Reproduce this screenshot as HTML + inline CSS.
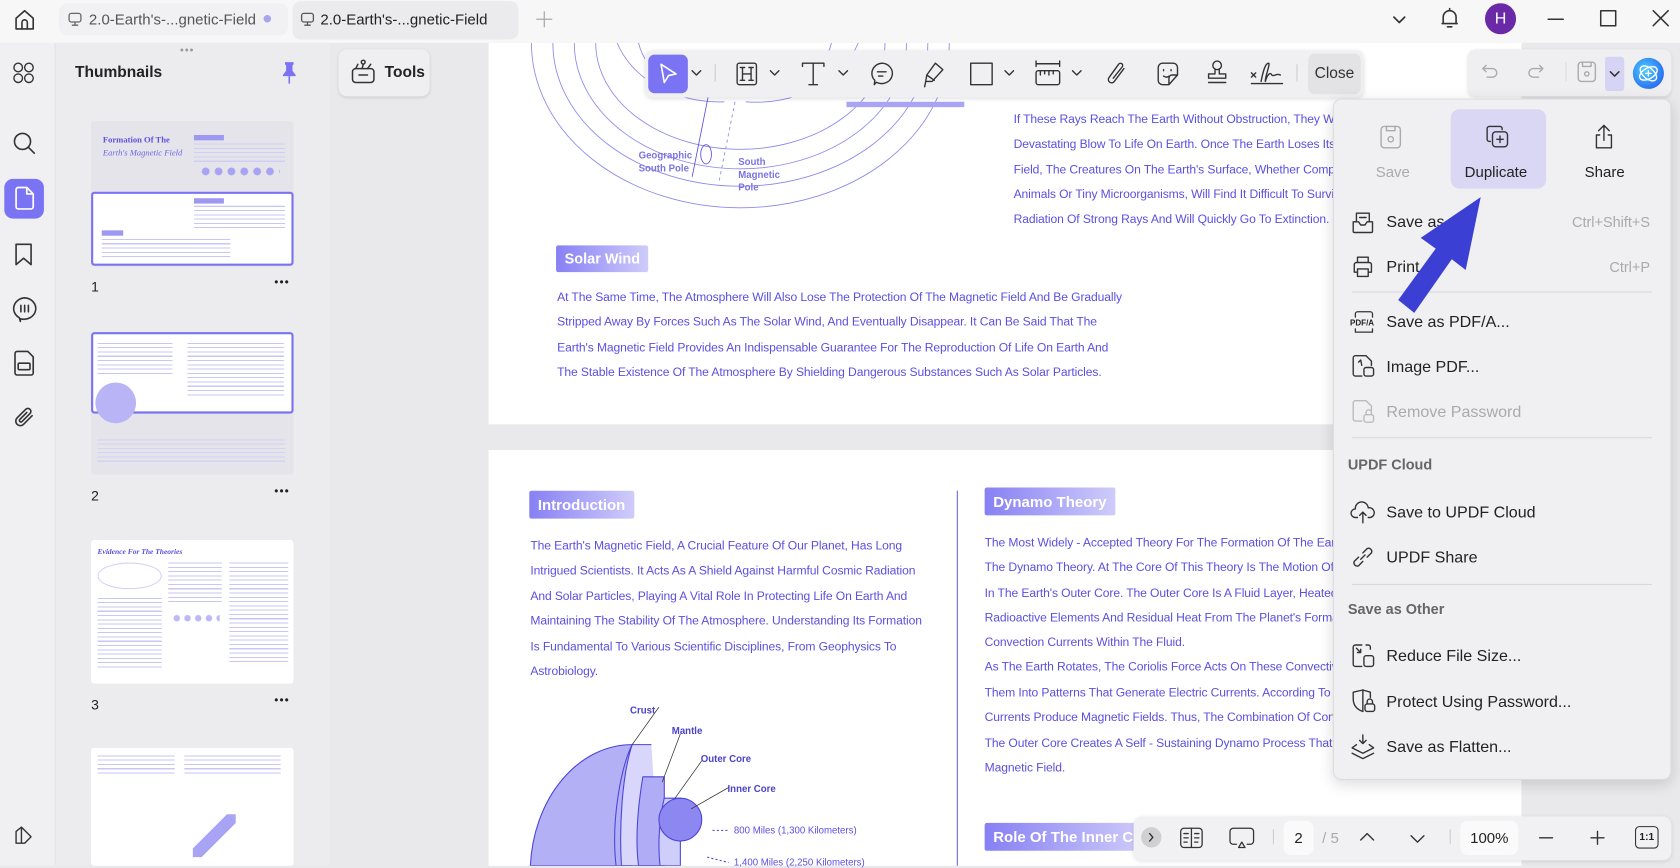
<!DOCTYPE html>
<html><head><meta charset="utf-8"><style>
*{box-sizing:border-box;margin:0;padding:0}
html,body{width:1680px;height:866px;overflow:hidden;background:#e9e9eb}
#w{position:absolute;left:0;top:0;width:1568px;height:808px;transform:scale(1.071429);transform-origin:0 0;font-family:"Liberation Sans",sans-serif;color:#222}
.a{position:absolute}
.ic{position:absolute;fill:none;stroke:#333;stroke-width:1.5;stroke-linecap:round;stroke-linejoin:round}
.t{position:absolute;font-size:11.3px;color:#5b50e0;white-space:nowrap;letter-spacing:-.1px}
.badge{position:absolute;color:#fff;font-weight:bold;font-size:14px;padding:0 8px;line-height:26px;white-space:nowrap;overflow:hidden;background:linear-gradient(90deg,#8780f4,#cfccfa);border-radius:2px}
.mi{position:absolute;left:1294px;font-size:15px;color:#222}
.sc{position:absolute;right:28px;font-size:13.5px;color:#aaa}
.sep{position:absolute;left:1262px;width:280px;height:1px;background:#d8d8dc}
.th{position:absolute;left:85px;width:189px;background:#fff;border-radius:3px}
</style></head><body><div id="w">
<div class="a" style="left:0;top:0;width:1568px;height:40px;background:#f7f7f8"></div>
<svg class="ic" style="left:11px;top:7px" width="24" height="24" viewBox="0 0 24 24"><path d="M4 10 L12 3 L20 10 V20 H4 Z"/><path d="M9.5 20 V14 a2.5 2.5 0 0 1 5 0 V20"/></svg>
<div class="a" style="left:55px;top:3px;width:214px;height:30px;border-radius:8px;background:#f1f1f3"></div>
<svg class="ic" style="left:63px;top:11px;stroke:#666;stroke-width:1.2" width="14" height="14" viewBox="0 0 14 14"><rect x="1.5" y="1.5" width="11" height="8" rx="2"/><path d="M7 9.5 V12 M4.5 12.5 H9.5"/></svg>
<div class="a" style="left:83px;top:10px;font-size:14px;color:#555">2.0-Earth's-...gnetic-Field</div>
<div class="a" style="left:246px;top:14px;width:7px;height:7px;border-radius:50%;background:#a9a4ee"></div>
<div class="a" style="left:273px;top:1px;width:211px;height:36px;border-radius:8px;background:#ebebed"></div>
<svg class="ic" style="left:280px;top:11px;stroke:#555;stroke-width:1.2" width="14" height="14" viewBox="0 0 14 14"><rect x="1.5" y="1.5" width="11" height="8" rx="2"/><path d="M7 9.5 V12 M4.5 12.5 H9.5"/></svg>
<div class="a" style="left:299px;top:10px;font-size:14px;color:#222">2.0-Earth's-...gnetic-Field</div>
<svg class="ic" style="left:500px;top:10px;stroke:#aaa;stroke-width:1.2" width="16" height="16"><path d="M8 1 V15 M1 8 H15"/></svg>
<svg class="ic" style="left:1299px;top:11px;stroke-width:1.6" width="14" height="14"><path d="M2 5 L7 10 L12 5"/></svg>
<svg class="ic" style="left:1342px;top:6px" width="22" height="22" viewBox="0 0 22 22"><path d="M5 16 V10 a6 6 0 0 1 12 0 V16 H4 H18"/><path d="M9 19 H13 M11 2 V4"/></svg>
<div class="a" style="left:1386px;top:3px;width:29px;height:29px;border-radius:50%;background:#6a2aa8;color:#fff;font-size:15px;text-align:center;line-height:29px">H</div>
<svg class="ic" style="left:1443px;top:9px;stroke-width:1.4" width="18" height="18"><path d="M2 9 H16"/></svg>
<svg class="ic" style="left:1492px;top:8px;stroke-width:1.4" width="18" height="18"><rect x="2" y="2" width="14" height="14"/></svg>
<svg class="ic" style="left:1541px;top:8px;stroke-width:1.4" width="18" height="18"><path d="M2 2 L16 16 M16 2 L2 16"/></svg>

<div class="a" style="left:0;top:40px;width:52px;height:768px;background:#f0f0f2;border-right:1px solid #e0e0e3"></div>
<svg class="ic" style="left:11px;top:57px;stroke-width:1.3" width="22" height="22"><circle cx="6" cy="6" r="4"/><circle cx="16" cy="6" r="4"/><circle cx="6" cy="16" r="4"/><circle cx="16" cy="16" r="4"/></svg>
<svg class="ic" style="left:11px;top:122px" width="24" height="24"><circle cx="10" cy="10" r="7.5"/><path d="M15.5 15.5 L21 21"/></svg>
<div class="a" style="left:4px;top:167px;width:37px;height:37px;border-radius:8px;background:#7a74f4"></div>
<svg class="ic" style="left:13px;top:174px;stroke:#fff;stroke-width:1.6" width="20" height="22"><path d="M2 3 a2 2 0 0 1 2-2 H12 L18 7 V19 a2 2 0 0 1-2 2 H4 a2 2 0 0 1-2-2 Z M12 1 V7 H18"/></svg>
<svg class="ic" style="left:13px;top:226px" width="20" height="24"><path d="M2 2 H16 V21 L9 15 L2 21 Z"/></svg>
<svg class="ic" style="left:10px;top:276px" width="26" height="26"><path d="M13 2 a11 10 0 1 1-4 19.5 L9 24 L8 20.5 A11 10 0 0 1 13 2 Z"/><path d="M9.5 9 V15 M13 9 V15 M16.5 9 V15"/></svg>
<svg class="ic" style="left:12px;top:327px" width="22" height="25"><path d="M2 3 a2 2 0 0 1 2-2 H14 L19 6 V21 a2 2 0 0 1-2 2 H4 a2 2 0 0 1-2-2 Z"/><rect x="5" y="12" width="11" height="6" rx="1"/></svg>
<svg class="ic" style="left:11px;top:378px" width="24" height="24"><path d="M19 10 L11 18 a4 4 0 0 1-6-6 L13 4 a2.8 2.8 0 0 1 4 4 L9.5 15.5 a1.3 1.3 0 0 1-2-2 L14 7"/></svg>
<svg class="ic" style="left:12px;top:770px;stroke-width:1.3" width="20" height="20"><path d="M3 17 V6 L8 2 L17 11 L11 17 Z M8 2 V17"/></svg>

<div class="a" style="left:52px;top:40px;width:256px;height:768px;background:#ececee"></div>
<div class="a" style="left:168px;top:42px;font-size:10px;color:#999;letter-spacing:1px">•••</div>
<div class="a" style="left:70px;top:60px;font-size:14.5px;font-weight:bold;color:#222">Thumbnails</div>
<svg class="a" style="left:262px;top:57px" width="16" height="22"><path d="M4 1 H12 V3 L11 4 V9 L14 13 V14 H2 V13 L5 9 V4 L4 3 Z" fill="#7a74f4"/><path d="M8 14 V21" stroke="#7a74f4" stroke-width="1.5"/></svg>
<div class="th" style="top:113px;height:136px;background:#e4e4ea"></div>
<div class="a" style="left:96px;top:126px;font-family:'Liberation Serif',serif;font-size:8px;font-weight:bold;color:#5b50e0">Formation Of The</div>
<div class="a" style="left:96px;top:138px;font-family:'Liberation Serif',serif;font-size:8px;font-style:italic;color:#6e66e6">Earth's Magnetic Field</div>
<div class="a" style="left:181px;top:126px;width:28px;height:5px;background:#9d98f2"></div>
<div class="a" style="left:181px;top:134px;width:85px;height:18px;background:repeating-linear-gradient(#d0cef5 0 1px,transparent 1px 4px)"></div>
<div class="a" style="left:186px;top:154px;width:75px;height:12px;background:radial-gradient(circle,#a8a3f3 40%,transparent 45%) 0 0/12px 12px"></div>
<div class="th" style="top:179px;height:69px;border:2px solid #7a74f4"></div>
<div class="a" style="left:181px;top:185px;width:28px;height:5px;background:#9d98f2"></div>
<div class="a" style="left:181px;top:192px;width:85px;height:22px;background:repeating-linear-gradient(#c9c6f5 0 1px,transparent 1px 4px)"></div>
<div class="a" style="left:95px;top:215px;width:20px;height:5px;background:#9d98f2"></div>
<div class="a" style="left:95px;top:223px;width:120px;height:18px;background:repeating-linear-gradient(#c9c6f5 0 1px,transparent 1px 4px)"></div>
<div class="a" style="left:85px;top:260px;font-size:13px">1</div>
<div class="a" style="left:256px;top:258px;font-size:11px;letter-spacing:1px">•••</div>
<div class="th" style="top:310px;height:133px;background:#e4e4ea"></div>
<div class="th" style="top:310px;height:76px;border:2px solid #7a74f4"></div>
<div class="a" style="left:91px;top:320px;width:70px;height:30px;background:repeating-linear-gradient(#c9c6f5 0 1px,transparent 1px 4px)"></div>
<div class="a" style="left:175px;top:320px;width:90px;height:50px;background:repeating-linear-gradient(#c9c6f5 0 1px,transparent 1px 4px)"></div>
<div class="a" style="left:89px;top:357px;width:38px;height:38px;border-radius:50%;background:#b8b4f6"></div>
<div class="a" style="left:91px;top:410px;width:175px;height:22px;background:repeating-linear-gradient(#d4d2f3 0 1px,transparent 1px 4px)"></div>
<div class="a" style="left:85px;top:455px;font-size:13px">2</div>
<div class="a" style="left:256px;top:453px;font-size:11px;letter-spacing:1px">•••</div>
<div class="th" style="top:504px;height:134px"></div>
<div class="a" style="left:91px;top:511px;font-family:'Liberation Serif',serif;font-size:7px;font-style:italic;color:#5b50e0"><b>Evidence For The Theories</b></div>
<div class="a" style="left:91px;top:525px;width:60px;height:25px;border-radius:50%;border:1px solid #d2d0f6"></div>
<div class="a" style="left:91px;top:558px;width:60px;height:66px;background:repeating-linear-gradient(#c9c6f5 0 1px,transparent 1px 4px)"></div>
<div class="a" style="left:157px;top:525px;width:50px;height:40px;background:repeating-linear-gradient(#c9c6f5 0 1px,transparent 1px 4px)"></div>
<div class="a" style="left:160px;top:572px;width:45px;height:10px;background:radial-gradient(circle,#bdb9f5 40%,transparent 45%) 0 0/10px 10px"></div>
<div class="a" style="left:214px;top:525px;width:55px;height:95px;background:repeating-linear-gradient(#c9c6f5 0 1px,transparent 1px 4px)"></div>
<div class="a" style="left:85px;top:650px;font-size:13px">3</div>
<div class="a" style="left:256px;top:648px;font-size:11px;letter-spacing:1px">•••</div>
<div class="th" style="top:698px;height:110px"></div>
<div class="a" style="left:91px;top:705px;width:72px;height:20px;background:repeating-linear-gradient(#c9c6f5 0 1px,transparent 1px 4px)"></div>
<div class="a" style="left:172px;top:705px;width:90px;height:20px;background:repeating-linear-gradient(#c9c6f5 0 1px,transparent 1px 4px)"></div>
<div class="a" style="left:180px;top:760px;width:40px;height:40px;background:linear-gradient(135deg,transparent 40%,#a8a3f3 40% 60%,transparent 60%)"></div>

<div class="a" style="left:310px;top:40px;width:1258px;height:768px;background:#e9e9eb"></div>
<div class="a" style="left:316px;top:46px;width:85px;height:44px;border-radius:8px;background:#efeff1;box-shadow:0 1px 3px rgba(0,0,0,.1)"></div>
<svg class="ic" style="left:326px;top:55px;stroke-width:1.4" width="26" height="24"><rect x="3" y="9" width="20" height="13" rx="3"/><path d="M9 15 H17"/><path d="M6 9 L8 5 M12 9 L13 5 M17 9 L20 5"/><circle cx="13" cy="3" r="1.8"/></svg>
<div class="a" style="left:359px;top:60px;font-size:14.5px;font-weight:bold">Tools</div>

<div class="a" style="left:456px;top:40px;width:964px;height:356px;background:#fff"></div>
<svg class="a" style="left:456px;top:40px" width="440" height="160" fill="none" stroke="#8d88ea" stroke-width=".8">
<path d="M40 0 A190 150 0 0 0 430 0"/><path d="M60 0 A170 130 0 0 0 410 0"/><path d="M80 0 A145 110 0 0 0 390 0"/><path d="M100 0 A125 92 0 0 0 370 0"/>
<path d="M120 0 A100 80 0 0 0 220 55"/><path d="M140 0 A80 60 0 0 0 215 50"/><path d="M240 55 A100 80 0 0 0 345 0"/><path d="M245 50 A80 60 0 0 0 320 0"/>
<path d="M205 50 L190 125" stroke="#5b50e0"/><path d="M230 55 L215 130" stroke-dasharray="3 3"/>
<ellipse cx="203" cy="104" rx="5" ry="9" stroke="#5b50e0"/></svg>
<div class="a" style="left:596px;top:139px;font-size:9px;font-weight:bold;color:#7a74e0;line-height:12px">Geographic<br>South Pole</div>
<div class="a" style="left:689px;top:145px;font-size:9px;font-weight:bold;color:#7a74e0;line-height:12px">South<br>Magnetic<br>Pole</div>
<div class="a" style="left:790px;top:95px;width:110px;height:5px;background:#a9a4f3"></div>
<div class="t" style="left:946px;top:106px">If These Rays Reach The Earth Without Obstruction, They Wi</div>
<div class="t" style="left:946px;top:129px">Devastating Blow To Life On Earth. Once The Earth Loses Its</div>
<div class="t" style="left:946px;top:153px">Field, The Creatures On The Earth's Surface, Whether Compl</div>
<div class="t" style="left:946px;top:176px">Animals Or Tiny Microorganisms, Will Find It Difficult To Survi</div>
<div class="t" style="left:946px;top:199px">Radiation Of Strong Rays And Will Quickly Go To Extinction.</div>
<div class="badge" style="left:519px;top:229px;height:25px;font-size:13.5px;line-height:25px">Solar Wind</div>
<div class="t" style="left:520px;top:272px">At The Same Time, The Atmosphere Will Also Lose The Protection Of The Magnetic Field And Be Gradually</div>
<div class="t" style="left:520px;top:295px">Stripped Away By Forces Such As The Solar Wind, And Eventually Disappear. It Can Be Said That The</div>
<div class="t" style="left:520px;top:319px">Earth's Magnetic Field Provides An Indispensable Guarantee For The Reproduction Of Life On Earth And</div>
<div class="t" style="left:520px;top:342px">The Stable Existence Of The Atmosphere By Shielding Dangerous Substances Such As Solar Particles.</div>

<div class="a" style="left:456px;top:420px;width:964px;height:388px;background:#fff"></div>
<div class="badge" style="left:494px;top:458px;height:26px">Introduction</div>
<div class="t" style="left:495px;top:504px">The Earth's Magnetic Field, A Crucial Feature Of Our Planet, Has Long</div>
<div class="t" style="left:495px;top:527px">Intrigued Scientists. It Acts As A Shield Against Harmful Cosmic Radiation</div>
<div class="t" style="left:495px;top:551px">And Solar Particles, Playing A Vital Role In Protecting Life On Earth And</div>
<div class="t" style="left:495px;top:574px">Maintaining The Stability Of The Atmosphere. Understanding Its Formation</div>
<div class="t" style="left:495px;top:598px">Is Fundamental To Various Scientific Disciplines, From Geophysics To</div>
<div class="t" style="left:495px;top:621px">Astrobiology.</div>
<div class="a" style="left:893px;top:458px;width:1px;height:350px;background:#6a62e0"></div>
<div class="badge" style="left:919px;top:455px;height:26px">Dynamo Theory</div>
<div class="t" style="left:919px;top:501px">The Most Widely - Accepted Theory For The Formation Of The Ear</div>
<div class="t" style="left:919px;top:524px">The Dynamo Theory. At The Core Of This Theory Is The Motion Of</div>
<div class="t" style="left:919px;top:548px">In The Earth's Outer Core. The Outer Core Is A Fluid Layer, Heated</div>
<div class="t" style="left:919px;top:571px">Radioactive Elements And Residual Heat From The Planet's Forma</div>
<div class="t" style="left:919px;top:594px">Convection Currents Within The Fluid.</div>
<div class="t" style="left:919px;top:617px">As The Earth Rotates, The Coriolis Force Acts On These Convectiv</div>
<div class="t" style="left:919px;top:641px">Them Into Patterns That Generate Electric Currents. According To</div>
<div class="t" style="left:919px;top:664px">Currents Produce Magnetic Fields. Thus, The Combination Of Conv</div>
<div class="t" style="left:919px;top:688px">The Outer Core Creates A Self - Sustaining Dynamo Process That</div>
<div class="t" style="left:919px;top:711px">Magnetic Field.</div>
<div class="badge" style="left:919px;top:768px;height:26px;width:150px">Role Of The Inner Core</div>
<svg class="a" style="left:490px;top:655px" width="320" height="153" fill="none" stroke="#4b43d8" stroke-width="1">
<path d="M100 40 A95 120 0 0 0 5 153 H100 Z" fill="#b4b0f6"/>
<path d="M100 40 C 90 60 80 110 85 153" stroke="#4b43d8"/>
<path d="M118 40 L100 40 C 90 70 88 120 90 153 H125" fill="#d8d6fb"/>
<path d="M110 70 C105 100 103 130 106 153 H130 V70 Z" fill="#b0acf6"/>
<path d="M130 90 C125 110 124 135 126 153 H145 V90 Z" fill="#cfcdfa"/>
<circle cx="145" cy="110" r="20" fill="#8d87f2"/>
<path d="M100 40 L125 5 M128 75 L145 30 M140 90 L165 55 M155 100 L190 80" stroke="#333" stroke-width=".7"/>
<path d="M175 120 L190 120" stroke-dasharray="2 2"/><path d="M170 145 L190 150" stroke-dasharray="2 2"/></svg>
<div class="a" style="left:588px;top:658px;font-size:9px;font-weight:bold;color:#4b43c8">Crust</div>
<div class="a" style="left:627px;top:677px;font-size:9px;font-weight:bold;color:#4b43c8">Mantle</div>
<div class="a" style="left:654px;top:703px;font-size:9px;font-weight:bold;color:#4b43c8">Outer Core</div>
<div class="a" style="left:679px;top:731px;font-size:9px;font-weight:bold;color:#4b43c8">Inner Core</div>
<div class="a" style="left:685px;top:770px;font-size:9px;color:#5b50e0">800 Miles (1,300 Kilometers)</div>
<div class="a" style="left:685px;top:800px;font-size:9px;color:#5b50e0">1,400 Miles (2,250 Kilometers)</div>

<div class="a" style="left:602px;top:47px;width:671px;height:44px;border-radius:8px;background:#f0f0f2;box-shadow:0 1px 4px rgba(0,0,0,.12)"></div>
<div class="a" style="left:605px;top:51px;width:37px;height:36px;border-radius:6px;background:#7a74f4"></div>
<svg class="ic" style="left:613px;top:58px;stroke:#fff" width="22" height="22"><path d="M4 2 L18 11 L11 12.5 L7 19 Z"/></svg>
<svg class="ic" style="left:645px;top:64px;stroke-width:1.3" width="10" height="8"><path d="M1 2 L5 6 L9 2"/></svg>
<div class="a" style="left:667px;top:60px;width:1px;height:16px;background:#ccc"></div>
<svg class="ic" style="left:686px;top:57px;stroke-width:1.3" width="22" height="24"><rect x="2" y="2" width="18" height="20" rx="2"/><path d="M7 6 V18 M15 6 V18 M7 12 H15 M5 6 H9 M13 6 H17 M5 18 H9 M13 18 H17"/></svg>
<svg class="ic" style="left:718px;top:64px;stroke-width:1.3" width="10" height="8"><path d="M1 2 L5 6 L9 2"/></svg>
<svg class="ic" style="left:746px;top:57px;stroke-width:1.3" width="26" height="24"><path d="M3 5 V2 H23 V5 M13 2 V22 M9 22 H17"/></svg>
<svg class="ic" style="left:782px;top:64px;stroke-width:1.3" width="10" height="8"><path d="M1 2 L5 6 L9 2"/></svg>
<svg class="ic" style="left:811px;top:57px;stroke-width:1.3" width="24" height="24"><path d="M12 2 a10 9.5 0 1 1-5 17.8 L5 22 L5.5 18 A10 9.5 0 0 1 12 2 Z M8 10 H16 M9 14 H13"/></svg>
<svg class="ic" style="left:859px;top:56px;stroke-width:1.3" width="24" height="26"><path d="M14 3 L21 9 L11 20 L5 20 L4 25 M5 20 L6 14 L14 3 M6 14 L13 19"/></svg>
<svg class="ic" style="left:904px;top:57px;stroke-width:1.3" width="24" height="24"><rect x="2" y="2" width="20" height="20"/></svg>
<svg class="ic" style="left:937px;top:64px;stroke-width:1.3" width="10" height="8"><path d="M1 2 L5 6 L9 2"/></svg>
<svg class="ic" style="left:965px;top:55px;stroke-width:1.3" width="26" height="28"><path d="M2 2 V7 M24 2 V7 M2 4.5 H24"/><rect x="2" y="11" width="22" height="13" rx="2"/><path d="M6 11 V15 M10 11 V14 M14 11 V15 M18 11 V14"/></svg>
<svg class="ic" style="left:1000px;top:64px;stroke-width:1.3" width="10" height="8"><path d="M1 2 L5 6 L9 2"/></svg>
<svg class="ic" style="left:1031px;top:56px;stroke-width:1.3" width="24" height="26"><path d="M18 8 L9 20 a3 3 0 0 1-5-3.5 L13 4 a2 2 0 0 1 3.5 2.3 L8 17"/></svg>
<svg class="ic" style="left:1077px;top:56px;stroke-width:1.3" width="26" height="26"><path d="M4 7 a4 4 0 0 1 4-4 H18 a4 4 0 0 1 4 4 V14 L14 23 H8 a4 4 0 0 1-4-4 Z M22 14 H17 a3 3 0 0 0-3 3 V23"/><path d="M9 9 V10 M16 9 V10 M9 15 Q12 17 14 15"/></svg>
<svg class="ic" style="left:1123px;top:55px;stroke-width:1.3" width="26" height="26"><circle cx="13" cy="6" r="4"/><path d="M11 10 V14 H5 V18 H21 V14 H15 V10 M5 22 H21"/></svg>
<svg class="ic" style="left:1165px;top:56px;stroke-width:1.3" width="34" height="26"><path d="M3 12 L7 16 M7 12 L3 16 M3 22 H32"/><path d="M12 20 C14 10 16 3 19 3 C21 3 15 18 16 20 C17 16 20 10 22 14 C24 16 26 12 30 14"/></svg>
<div class="a" style="left:1210px;top:60px;width:1px;height:16px;background:#ccc"></div>
<div class="a" style="left:1221px;top:50px;width:49px;height:38px;border-radius:6px;background:#e3e3e5;font-size:14.5px;text-align:center;line-height:38px;color:#333">Close</div>

<div class="a" style="left:1370px;top:46px;width:190px;height:44px;border-radius:8px;background:#efeff1;box-shadow:0 1px 3px rgba(0,0,0,.1)"></div>
<svg class="ic" style="left:1382px;top:59px;stroke:#aaa;stroke-width:1.3" width="18" height="16"><path d="M5 2 L2 5 L5 8 M2 5 H11 a4 4 0 0 1 0 8 H6"/></svg>
<svg class="ic" style="left:1424px;top:59px;stroke:#aaa;stroke-width:1.3" width="18" height="16"><path d="M13 2 L16 5 L13 8 M16 5 H7 a4 4 0 0 0 0 8 H12"/></svg>
<div class="a" style="left:1461px;top:58px;width:1px;height:18px;background:#ddd"></div>
<svg class="ic" style="left:1471px;top:56px;stroke:#aaa;stroke-width:1.3" width="20" height="22"><rect x="2" y="2" width="16" height="18" rx="3"/><path d="M6 2 V6 H14 V2"/><circle cx="10" cy="13" r="2"/></svg>
<div class="a" style="left:1498px;top:53px;width:18px;height:32px;border-radius:3px;background:#d6d4f4"></div>
<svg class="ic" style="left:1502px;top:65px;stroke-width:1.4" width="10" height="8"><path d="M1 2 L5 6 L9 2"/></svg>
<div class="a" style="left:1524px;top:54px;width:29px;height:29px;border-radius:50%;background:radial-gradient(circle at 40% 40%,#4fd0ff,#2a73f0 70%,#5a4ee8)"></div>
<svg class="ic" style="left:1526px;top:56px;stroke:#fff;stroke-width:1.3" width="25" height="25"><ellipse cx="12.5" cy="12.5" rx="9" ry="5" transform="rotate(-30 12.5 12.5)"/><ellipse cx="12.5" cy="12.5" rx="9" ry="5" transform="rotate(40 12.5 12.5)"/><path d="M12.5 10 V15 M10 12.5 H15"/></svg>

<div class="a" style="left:1244px;top:92px;width:316px;height:636px;border-radius:8px;background:#f0f0f2;border:1px solid #dcdce0;box-shadow:0 4px 14px rgba(0,0,0,.14)"></div>
<svg class="ic" style="left:1287px;top:116px;stroke:#aaa;stroke-width:1.3" width="22" height="24"><rect x="2" y="2" width="18" height="20" rx="3"/><path d="M7 2 V6 H15 V2"/><circle cx="11" cy="14" r="2.5"/></svg>
<div class="a" style="left:1284px;top:152px;font-size:14px;color:#aaa">Save</div>
<div class="a" style="left:1354px;top:102px;width:89px;height:74px;border-radius:8px;background:#d9d7f3"></div>
<svg class="ic" style="left:1386px;top:116px;stroke-width:1.3" width="24" height="24"><path d="M16 5 V4 a2 2 0 0 0-2-2 H4 a2 2 0 0 0-2 2 V14 a2 2 0 0 0 2 2 H5"/><rect x="7" y="7" width="14" height="14" rx="3"/><path d="M14 11 V17 M11 14 H17"/></svg>
<div class="a" style="left:1367px;top:152px;font-size:14px;color:#222">Duplicate</div>
<svg class="ic" style="left:1486px;top:115px;stroke-width:1.3" width="22" height="26"><path d="M11 16 V2 M6 7 L11 2 L16 7 M7 11 H4 V23 H18 V11 H15"/></svg>
<div class="a" style="left:1479px;top:152px;font-size:14px;color:#222">Share</div>

<svg class="ic" style="left:1261px;top:197px;stroke-width:1.3" width="22" height="22"><path d="M5 2 H17 V10 M5 10 V2 M8 6 H14 M2 10 V19 a1 1 0 0 0 1 1 H19 a1 1 0 0 0 1-1 V10 H15 L13 13 H9 L7 10 Z"/></svg>
<div class="mi" style="top:199px">Save as</div><div class="sc" style="top:200px">Ctrl+Shift+S</div>
<svg class="ic" style="left:1261px;top:238px;stroke-width:1.3" width="22" height="22"><path d="M6 7 V2 H16 V7 M6 16 H3 V9 a2 2 0 0 1 2-2 H17 a2 2 0 0 1 2 2 V16 H16"/><rect x="6" y="13" width="10" height="7"/></svg>
<div class="mi" style="top:241px">Print</div><div class="sc" style="top:242px">Ctrl+P</div>
<div class="sep" style="top:272px"></div>
<svg class="ic" style="left:1261px;top:289px;stroke-width:1.2" width="24" height="24"><path d="M4 7 V4 a2 2 0 0 1 2-2 H18 a2 2 0 0 1 2 2 V7 M4 18 V21 H20 V18"/></svg>
<div class="a" style="left:1260px;top:297px;font-size:7.5px;font-weight:bold">PDF/A</div>
<div class="mi" style="top:292px">Save as PDF/A...</div>
<svg class="ic" style="left:1261px;top:330px;stroke-width:1.3" width="24" height="24"><path d="M10 21 H4 a2 2 0 0 1-2-2 V4 a2 2 0 0 1 2-2 H14 L19 7 V11"/><path d="M7 8 L9 6 L10 11"/><rect x="12" y="13" width="9" height="8" rx="2"/></svg>
<div class="mi" style="top:334px">Image PDF...</div>
<svg class="ic" style="left:1261px;top:372px;stroke:#bbb;stroke-width:1.3" width="24" height="24"><path d="M10 21 H4 a2 2 0 0 1-2-2 V4 a2 2 0 0 1 2-2 H14 L19 7 V11"/><rect x="12" y="15" width="9" height="7" rx="2"/><path d="M14 15 V13 a2.5 2.5 0 0 1 5 0 V15"/></svg>
<div class="mi" style="top:376px;color:#aaa">Remove Password</div>
<div class="sep" style="top:408px"></div>
<div class="a" style="left:1258px;top:426px;font-size:13.5px;font-weight:bold;color:#666">UPDF Cloud</div>
<svg class="ic" style="left:1259px;top:466px;stroke-width:1.3" width="26" height="24"><path d="M8 17 H6 a4 4 0 0 1 0-8 a6 6 0 0 1 12-1 a4 4 0 0 1 2 9 H18 M13 22 V12 M10 15 L13 12 L16 15"/></svg>
<div class="mi" style="top:470px">Save to UPDF Cloud</div>
<svg class="ic" style="left:1260px;top:508px;stroke-width:1.3" width="24" height="24"><path d="M10 14 L14 10 M8 12 L4 16 a3 3 0 0 0 4 4 L12 16 M12 8 L16 4 a3 3 0 0 1 4 4 L16 12"/></svg>
<div class="mi" style="top:512px">UPDF Share</div>
<div class="sep" style="top:545px"></div>
<div class="a" style="left:1258px;top:561px;font-size:13.5px;font-weight:bold;color:#666">Save as Other</div>
<svg class="ic" style="left:1261px;top:600px;stroke-width:1.3" width="24" height="24"><path d="M10 22 H4 a2 2 0 0 1-2-2 V4 a2 2 0 0 1 2-2 H10 M14 2 H16 a2 2 0 0 1 2 2 V6 M5 5 L9 9 M9 6 V9 H6"/><rect x="12" y="12" width="9" height="10" rx="2"/></svg>
<div class="mi" style="top:604px">Reduce File Size...</div>
<svg class="ic" style="left:1261px;top:642px;stroke-width:1.3" width="26" height="24"><path d="M11 22 C5 20 2 16 2 10 V4 L11 2 L18 4 V9"/><path d="M11 2 V22"/><rect x="13" y="15" width="9" height="7" rx="2"/><path d="M15 15 V13 a2.5 2.5 0 0 1 5 0 V15"/></svg>
<div class="mi" style="top:647px">Protect Using Password...</div>
<svg class="ic" style="left:1259px;top:684px;stroke-width:1.3" width="26" height="26"><path d="M13 2 V10 M10 7 L13 10 L16 7 M7 11 L3 14 L13 19 L23 14 L19 11 M3 19 L13 24 L23 19"/></svg>
<div class="mi" style="top:689px">Save as Flatten...</div>

<svg class="a" style="left:1300px;top:180px" width="100" height="120"><path d="M82 4 L68 72 L55 62 L20 112 L5 100 L40 52 L26 42 Z" fill="#3c3fd4"/></svg>

<div class="a" style="left:1058px;top:762px;width:502px;height:41px;border-radius:8px;background:#f1f1f3;box-shadow:0 1px 4px rgba(0,0,0,.12)"></div>
<div class="a" style="left:1065px;top:772px;width:19px;height:19px;border-radius:50%;background:#d0d0d3"></div>
<svg class="ic" style="left:1070px;top:777px;stroke-width:1.3" width="9" height="9"><path d="M3 1 L6 4.5 L3 8"/></svg>
<svg class="ic" style="left:1100px;top:771px;stroke-width:1.2" width="24" height="22"><rect x="2" y="2" width="20" height="18" rx="3"/><path d="M12 2 V20 M5 7 H9 M5 11 H9 M5 15 H8 M15 7 H19 M15 11 H19 M15 15 H18"/></svg>
<svg class="ic" style="left:1146px;top:771px;stroke-width:1.2" width="26" height="24"><path d="M8 17 H5 a3 3 0 0 1-3-3 V5 a3 3 0 0 1 3-3 H21 a3 3 0 0 1 3 3 V14 a3 3 0 0 1-3 3 H18 M13 15 L10 20 H16 Z"/></svg>
<div class="a" style="left:1188px;top:774px;width:1px;height:14px;background:#ccc"></div>
<div class="a" style="left:1198px;top:766px;width:28px;height:32px;border-radius:7px;background:#fafafa;font-size:14px;text-align:center;line-height:32px">2</div>
<div class="a" style="left:1234px;top:774px;font-size:14px;color:#aaa">/ 5</div>
<svg class="ic" style="left:1268px;top:775px;stroke-width:1.3" width="16" height="12"><path d="M2 9 L8 3 L14 9"/></svg>
<svg class="ic" style="left:1315px;top:777px;stroke-width:1.3" width="16" height="12"><path d="M2 3 L8 9 L14 3"/></svg>
<div class="a" style="left:1353px;top:774px;width:1px;height:14px;background:#ccc"></div>
<div class="a" style="left:1363px;top:766px;width:54px;height:32px;border-radius:7px;background:#fafafa;font-size:14px;text-align:center;line-height:32px">100%</div>
<svg class="ic" style="left:1435px;top:774px;stroke-width:1.3" width="16" height="16"><path d="M2 8 H14"/></svg>
<svg class="ic" style="left:1483px;top:774px;stroke-width:1.3" width="16" height="16"><path d="M2 8 H14 M8 2 V14"/></svg>
<div class="a" style="left:1526px;top:771px;width:22px;height:21px;border:1.4px solid #333;border-radius:4px;font-size:9.5px;text-align:center;line-height:19px;font-weight:bold">1:1</div>
</div></body></html>
